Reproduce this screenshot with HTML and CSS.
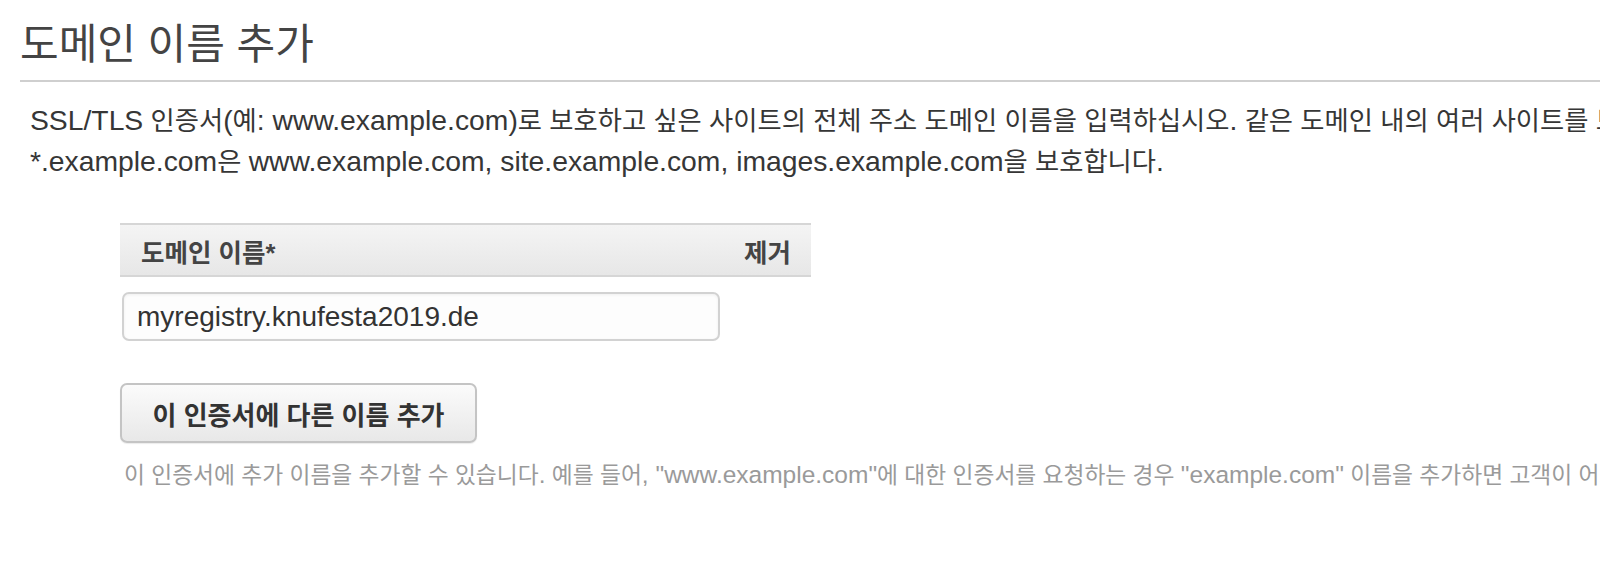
FILE: index.html
```html
<!DOCTYPE html>
<html lang="ko">
<head>
<meta charset="utf-8">
<title>도메인 이름 추가</title>
<link rel="stylesheet" href="styles.css">
</head>
<body>
<div class="page">
  <h1 class="title">도메인 이름 추가</h1>
  <div class="intro">
    <p class="line"><span class="lt">SSL/TLS</span> 인증서<span class="lt">(</span>예<span class="lt">: www.example.com)</span>로 보호하고 싶은 사이트의 전체 주소 도메인 이름을 입력하십시오<span class="lt">.</span> 같은 도메인 내의 여러 사이트를 보호하는 인증서를 요청하려면 별표<span class="lt">(*)</span>를 사용하십시오<span class="lt">.</span> 예를 들어<span class="lt">,</span></p>
    <p class="line"><span class="lt">*.example.com</span>은 <span class="lt">www.example.com, site.example.com, images.example.com</span>을 보호합니다<span class="lt">.</span></p>
  </div>
  <div class="domains">
    <div class="domains-head">
      <span>도메인 이름*</span>
      <span>제거</span>
    </div>
    <div class="domains-row">
      <input class="domain-input" type="text" value="myregistry.knufesta2019.de">
    </div>
    <button class="add-btn" type="button">이 인증서에 다른 이름 추가</button>
    <p class="help">이 인증서에 추가 이름을 추가할 수 있습니다<span class="lt">.</span> 예를 들어<span class="lt">, "www.example.com"</span>에 대한 인증서를 요청하는 경우 <span class="lt">"example.com"</span> 이름을 추가하면 고객이 어느 이름으로든 사이트에 접속할 수 있습니다<span class="lt">.</span></p>
  </div>
</div>
</body>
</html>
```
FILE: styles.css
```css
html, body {
  margin: 0;
  padding: 0;
  background: #ffffff;
}

body {
  font-family: "Liberation Sans", "Noto Sans CJK KR", sans-serif;
  color: #444444;
}

.page {
  width: 1600px;
  height: 580px;
  overflow: hidden;
  padding-left: 20px;
  box-sizing: border-box;
}

.title {
  margin: 0;
  padding: 19px 0 10px 0;
  font-size: 42px;
  line-height: 51px;
  font-weight: normal;
  color: #444444;
  border-bottom: 2px solid #cfcfcf;
  white-space: nowrap;
}

.intro {
  margin-top: 18px;
  padding-left: 10px;
}

.line {
  margin: 0;
  font-size: 26.3px;
  line-height: 40px;
  white-space: nowrap;
  color: #363636;
}

.lt {
  font-size: 28.3px;
}

.domains {
  margin-top: 41px;
  margin-left: 100px;
}

.domains-head {
  width: 691px;
  height: 54px;
  box-sizing: border-box;
  display: flex;
  justify-content: space-between;
  align-items: center;
  padding: 0 20px 0 21px;
  background: linear-gradient(#f4f4f4, #e7e7e7);
  border-top: 2px solid #d6d6d6;
  border-bottom: 2px solid #d6d6d6;
  font-size: 25.5px;
  font-weight: bold;
  color: #444444;
}

.domains-row {
  padding: 15px 0 0 2px;
}

.domain-input {
  display: block;
  width: 598px;
  height: 49px;
  box-sizing: border-box;
  margin: 0;
  padding: 0 13px;
  border: 2px solid #d2d2d2;
  border-radius: 7px;
  background: #fdfdfd;
  box-shadow: inset 0 1px 3px rgba(0, 0, 0, 0.06);
  font-family: "Liberation Sans", "Noto Sans CJK KR", sans-serif;
  font-size: 28px;
  color: #333333;
  outline: none;
}

.add-btn {
  display: block;
  margin-top: 42px;
  width: 357px;
  height: 60px;
  box-sizing: border-box;
  padding: 0;
  border: 2px solid #c4c4c4;
  border-radius: 7px;
  background: linear-gradient(#fbfbfb, #e8e8e8);
  box-shadow: 0 1px 1px rgba(0, 0, 0, 0.08);
  font-family: "Liberation Sans", "Noto Sans CJK KR", sans-serif;
  font-size: 26px;
  font-weight: bold;
  color: #333333;
}

.help {
  margin: 17px 0 0 4px;
  font-size: 22.75px;
  line-height: 30px;
  color: #9a9a9a;
  white-space: nowrap;
}

.help .lt {
  font-size: 24.5px;
}
```
